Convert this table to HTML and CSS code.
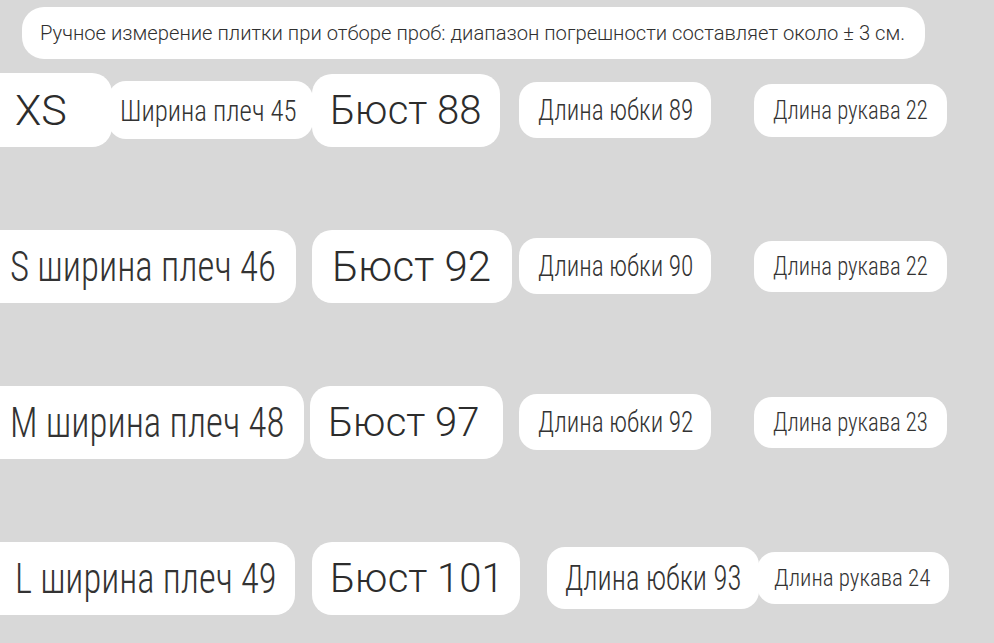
FILE: index.html
```html
<!DOCTYPE html>
<html lang="ru">
<head>
<meta charset="utf-8">
<title>Размеры</title>
<link rel="stylesheet" href="styles.css">
</head>
<body>
<div class="page">
  <div class="note"><span class="t">Ручное измерение плитки при отборе проб: диапазон погрешности составляет около ± 3 см.</span></div>

  <div class="row">
    <div class="size-group">
      <div class="pill pill-xs big">XS</div>
      <div class="pill pill-shoulder-sm cond"><span class="t">Ширина плеч 45</span></div>
    </div>
    <div class="pill bust bust-88 big">Бюст 88</div>
    <div class="pill skirt cond"><span class="t">Длина юбки 89</span></div>
    <div class="pill sleeve sleeve-1 cond"><span class="t">Длина рукава 22</span></div>
  </div>

  <div class="row">
    <div class="size-group">
      <div class="pill shoulder shoulder-s cond"><span class="t">S ширина плеч 46</span></div>
    </div>
    <div class="pill bust bust-92 big">Бюст 92</div>
    <div class="pill skirt skirt-90 cond"><span class="t">Длина юбки 90</span></div>
    <div class="pill sleeve sleeve-2 cond"><span class="t">Длина рукава 22</span></div>
  </div>

  <div class="row">
    <div class="size-group">
      <div class="pill shoulder shoulder-m cond"><span class="t">M ширина плеч 48</span></div>
    </div>
    <div class="pill bust bust-97 big">Бюст 97</div>
    <div class="pill skirt skirt-92 cond"><span class="t">Длина юбки 92</span></div>
    <div class="pill sleeve sleeve-3 cond"><span class="t">Длина рукава 23</span></div>
  </div>

  <div class="row">
    <div class="size-group">
      <div class="pill shoulder shoulder-l cond"><span class="t">L ширина плеч 49</span></div>
    </div>
    <div class="pill bust bust-101 big">Бюст 101</div>
    <div class="pill skirt skirt-93 cond"><span class="t">Длина юбки 93</span></div>
    <div class="pill sleeve sleeve-4 cond"><span class="t">Длина рукава 24</span></div>
  </div>
</div>
</body>
</html>
```

FILE: styles.css
```css
* { box-sizing: border-box; }

html, body {
  margin: 0;
  padding: 0;
}

body {
  width: 994px;
  height: 643px;
  overflow: hidden;
  background: #d8d8d8;
  color: #333333;
  font-family: Roboto, "Noto Sans", sans-serif;
  font-weight: 400;
}

.page {
  display: flex;
  flex-direction: column;
  gap: 82px;
  padding-top: 7px;
}

.t {
  display: inline-block;
  transform-origin: left center;
}

.note {
  align-self: flex-start;
  margin-left: 22px;
  width: 903px;
  height: 52px;
  margin-bottom: -68px;
  display: flex;
  align-items: center;
  padding-left: 18px;
  background: #ffffff;
  border-radius: 22px;
  font-family: Roboto, sans-serif;
  font-weight: 300;
  font-size: 20.2px;
  color: #303030;
  white-space: nowrap;
}

.row {
  height: 74px;
  display: grid;
  grid-template-columns: 312px 208px 234px 240px;
  align-items: center;
  justify-items: start;
}

.size-group {
  display: flex;
  align-items: center;
}

.pill {
  background: #ffffff;
  display: flex;
  align-items: center;
  white-space: nowrap;
  border-radius: 20px;
}

.big {
  font-family: Roboto, sans-serif;
  font-weight: 300;
  font-size: 40px;
  color: #2c2c2c;
}

.cond {
  font-family: "Roboto Condensed", Roboto, sans-serif;
  font-weight: 300;
  color: #333333;
}

/* row 1 */
.pill-xs {
  width: 132px;
  height: 74px;
  margin-left: -20px;
  padding-left: 35px;
  font-size: 43px;
}

.pill-shoulder-sm {
  width: 205px;
  height: 58px;
  margin-left: -4px;
  padding-left: 12px;
  font-size: 30px;
  border-radius: 18px;
}

.pill-shoulder-sm .t { transform: scaleX(0.895); }

.bust {
  height: 73px;
  padding-left: 18px;
}

.bust-88 { width: 188px; }
.bust-92 { width: 200px; font-size: 42px; padding-left: 20px; }
.bust-97 { width: 193px; margin-left: -2px; }
.bust-101 { width: 208px; }

.skirt {
  width: 192px;
  height: 56px;
  padding-left: 19px;
  font-size: 29.5px;
  border-radius: 18px;
  margin-left: -1px;
}

.skirt .t { transform: scaleX(0.857); }

.skirt-93 {
  width: 212px;
  height: 62px;
  margin-left: 27px;
  padding-left: 18px;
  font-size: 35px;
}

.skirt-93 .t { transform: scaleX(0.82); }

.sleeve {
  width: 193px;
  height: 51px;
  padding-left: 19px;
  font-size: 25px;
  border-radius: 18px;
}

.sleeve .t { transform: scaleX(0.91); }

.sleeve-1 { height: 53px; }
.sleeve-4 { margin-left: 3px; width: 192px; height: 52px; font-size: 24px; padding-left: 17px; position: relative; }
.sleeve-4 .t { transform: scaleX(0.957); }

/* first pills rows 2-4 */
.shoulder {
  height: 73px;
  margin-left: -20px;
  padding-left: 30px;
  font-size: 42px;
}

.shoulder .t { transform: scaleX(0.878); }

.shoulder-s { width: 316px; }
.shoulder-m { width: 324px; }
.shoulder-l { width: 315px; padding-left: 35px; font-size: 43px; }
.shoulder-l .t { transform: scaleX(0.85); }
```
